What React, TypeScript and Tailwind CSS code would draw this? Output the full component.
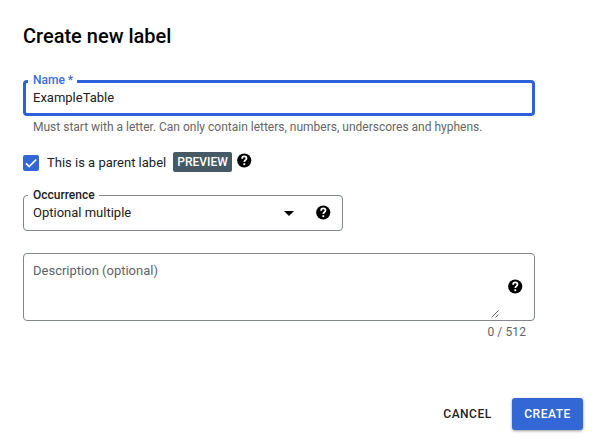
function HelpIcon() {
  return (
    <svg viewBox="0 0 24 24" className="block size-[17px] shrink-0" fill="none">
      <circle cx="11.6" cy="12" r="10" fill="black" />
      <path
        d="M8.6 9.5C8.6 7.5 9.9 6.3 11.7 6.3s3.1 1.1 3.1 2.8c0 2.4-3.1 2.5-3.1 5.1"
        stroke="white"
        strokeWidth="2.5"
      />
      <rect x="10.4" y="15.9" width="2.6" height="2.6" fill="white" />
    </svg>
  );
}

function FloatingLabel({ text, className }: { text: string; className: string }) {
  return (
    <span className={`absolute bg-white whitespace-nowrap text-[12px] leading-[14px] font-medium ${className}`}>
      {text}
    </span>
  );
}

function NameField() {
  return (
    <div>
      <div className="relative flex h-9 items-center rounded-[4px] border-3 border-[#2b62d9] pl-[7px] text-[13px]">
        <FloatingLabel text="Name *" className="-top-[10px] left-[2px] w-[49px] pl-[5px] text-[#3c6de0]" />
        <span>ExampleTable</span>
      </div>
      <p className="mt-[3px] pl-[10px] text-[12px] leading-4 whitespace-nowrap text-[#666]">
        Must start with a letter. Can only contain letters, numbers, underscores and hyphens.
      </p>
    </div>
  );
}

function ParentLabelRow() {
  return (
    <div className="mt-[17px] flex h-5 items-start">
      <span className="mt-[3px] flex size-4 items-center justify-center rounded-[2px] bg-[#3367d6]">
        <svg viewBox="0 0 16 16" className="size-4" fill="none" stroke="white" strokeWidth="1.7">
          <path d="M3 8.3 6.2 11.5 13.2 4.5" />
        </svg>
      </span>
      <span className="ml-2 w-[126px] pt-[3px] text-[13px] leading-4 whitespace-nowrap">
        This is a parent label
      </span>
      <span className="flex h-5 w-[59px] items-center justify-center rounded-[2px] bg-[#455a64] text-[12px] font-medium text-white">
        PREVIEW
      </span>
      <span className="ml-1 flex">
        <HelpIcon />
      </span>
    </div>
  );
}

function OccurrenceSelect() {
  return (
    <div className="relative mt-[23px] flex h-9 w-80 items-center rounded-[4px] border border-[#80868b] pr-[10px] pl-[9px] text-[13px]">
      <FloatingLabel text="Occurrence" className="-top-[8px] left-[4px] w-[71px] pl-[5px]" />
      <span className="flex-1">Optional multiple</span>
      <svg viewBox="0 0 10 5" className="mr-[21px] h-[5px] w-[10px]">
        <path d="M0 0h10L5 5z" />
      </svg>
      <span className="pb-px">
        <HelpIcon />
      </span>
    </div>
  );
}

function DescriptionField() {
  return (
    <div className="mt-[22px]">
      <div className="flex h-[68px] rounded-[4px] border border-[#80868b] pr-[10px] pl-[9px]">
        <span className="flex-1 pt-[9px] text-[13px] leading-4 text-[#5f6368]">
          Description (optional)
        </span>
        <svg viewBox="0 0 8 8" className="mr-2 mb-[2px] size-2 self-end" fill="none" stroke="#555" strokeWidth="0.9">
          <path d="M0.5 7.5 7.5 0.5M4.5 7.5 7.5 4.5" />
        </svg>
        <span className="flex items-center pb-[2px]">
          <HelpIcon />
        </span>
      </div>
      <p className="mt-[3px] pr-[9px] text-right text-[12px] leading-4 tracking-[0.1px] text-[#5f6368]">0 / 512</p>
    </div>
  );
}

function Actions() {
  return (
    <div className="mt-[58px] flex h-8 w-[560px] items-center justify-end text-[12px] font-medium tracking-[0.5px]">
      <button className="w-[49px] whitespace-nowrap">CANCEL</button>
      <button className="ml-5 h-8 w-[71px] rounded-[3px] bg-[#3367d6] text-white shadow-[0_1px_3px_rgba(0,0,0,0.4)]">
        CREATE
      </button>
    </div>
  );
}

export default function App() {
  return (
    <main className="h-[446px] w-[598px] overflow-hidden bg-white pt-6 pl-[23px] font-['Roboto',sans-serif] text-[#202124]">
      <h1 className="text-[20px] leading-6 font-medium whitespace-nowrap text-black">Create new label</h1>
      <div className="mt-8 w-[512px]">
        <NameField />
        <ParentLabelRow />
        <OccurrenceSelect />
        <DescriptionField />
      </div>
      <Actions />
    </main>
  );
}
